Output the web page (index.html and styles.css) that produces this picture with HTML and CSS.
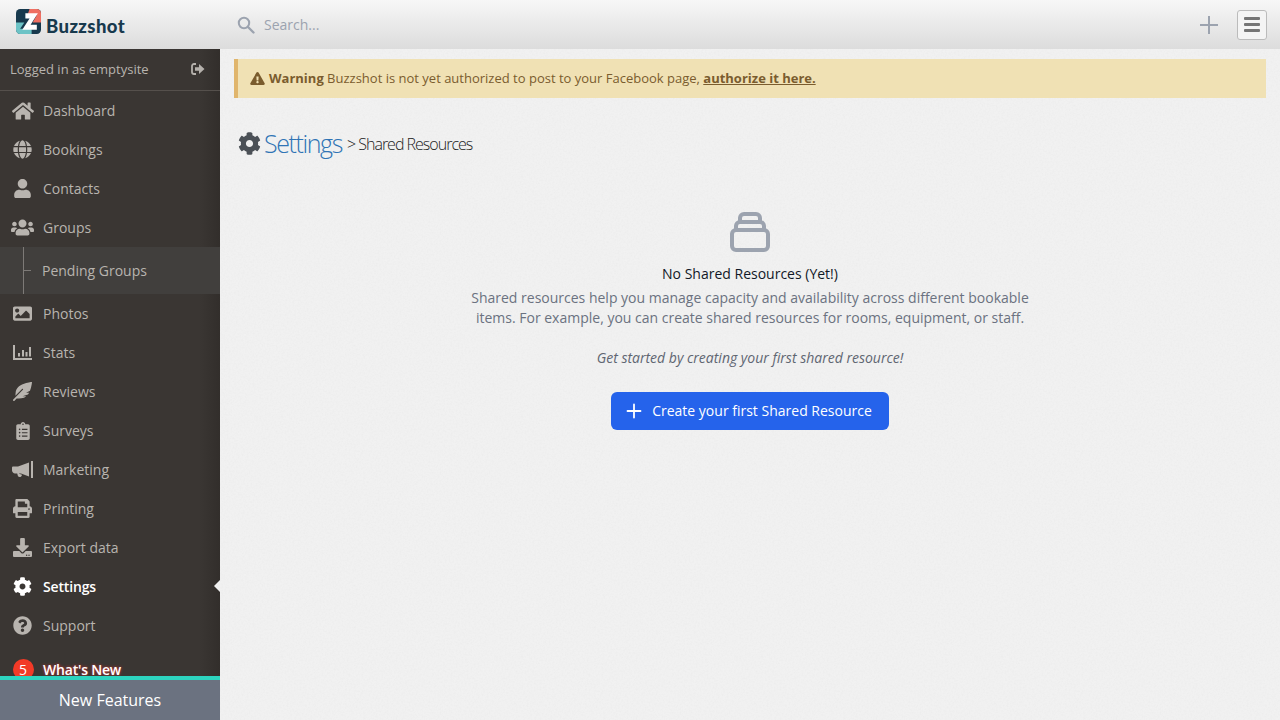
FILE: index.html
```html
<!DOCTYPE html>
<html lang="en">
<head>
<meta charset="utf-8">
<title>Buzzshot - Shared Resources</title>
<link rel="stylesheet" href="styles.css">
</head>
<body>
<header class="topbar">
  <div class="brand">
    <svg class="logo" viewBox="0 0 24 24" width="25" height="25">
      <rect width="24" height="24" rx="4" fill="#17394d"/>
      <path d="M13 0h7a4 4 0 0 1 4 4v9h-8l4-7H11z" fill="#ef6f62"/>
      <path d="M0 13h8l-4 6h11v5H4a4 4 0 0 1-4-4z" fill="#6cc3c6"/>
      <path d="M9 4h12l-7 11h6v5H6l7-11H9z" fill="#fff"/>
    </svg>
    <span class="brand-name">Buzzshot</span>
  </div>
  <div class="search">
    <svg class="search-icon" viewBox="0 0 18 18" width="18" height="18"><circle cx="7" cy="7" r="5.2" fill="none" stroke="#9ca3af" stroke-width="2"/><path d="M11 11l5.5 5.500" stroke="#9ca3af" stroke-width="2.400" stroke-linecap="round"/></svg>
    <span class="search-text">Search...</span>
  </div>
  <svg class="add-icon" viewBox="0 0 20 20" width="20" height="20"><path d="M10 1v18M1 10h18" stroke="#9ca3af" stroke-width="2"/></svg>
  <button class="menu-btn" type="button"><span></span><span></span><span></span></button>
</header>
<div class="body-row">
  <aside class="sidebar">
    <div class="login-row">
      <span>Logged in as emptysite</span>
      <svg class="logout" viewBox="0 0 14 12" width="14" height="12"><path d="M5 1H3a2 2 0 0 0-2 2v6a2 2 0 0 0 2 2h2" fill="none" stroke="#b5b1ac" stroke-width="1.800"/><path d="M4 4.300h4V1l5.500 5L8 11V7.700H4z" fill="#b5b1ac"/></svg>
    </div>
    <nav class="nav">
      <a class="nav-item"><span class="ico"><svg viewBox="0 0 576 512" width="22" height="20"><path d="M280.37 148.26L96 300.11V464a16 16 0 0 0 16 16l112.06-.29a16 16 0 0 0 15.92-16V368a16 16 0 0 1 16-16h64a16 16 0 0 1 16 16v95.64a16 16 0 0 0 16 16.05L464 480a16 16 0 0 0 16-16V300L295.67 148.26a12.19 12.19 0 0 0-15.3 0zM571.6 251.47L488 182.56V44.05a12 12 0 0 0-12-12h-56a12 12 0 0 0-12 12v72.61L318.47 43a48 48 0 0 0-61 0L4.34 251.47a12 12 0 0 0-1.6 16.9l25.5 31A12 12 0 0 0 45.15 301l235.22-193.74a12.19 12.19 0 0 1 15.3 0L530.9 301a12 12 0 0 0 16.9-1.6l25.5-31a12 12 0 0 0-1.7-16.93z"/></svg></span>Dashboard</a>
      <a class="nav-item"><span class="ico"><svg viewBox="0 0 496 512" width="19" height="19"><path d="M336.5 160C322 70.7 287.8 8 248 8s-74 62.7-88.5 152h177zM152 256c0 22.2 1.2 43.5 3.3 64h185.3c2.1-20.5 3.3-41.8 3.3-64s-1.2-43.5-3.3-64H155.3c-2.1 20.5-3.3 41.8-3.3 64zm324.7-96c-28.6-67.9-86.5-120.4-158-141.6 24.4 33.8 41.2 84.7 50 141.6h108zM177.2 18.4C105.8 39.6 47.8 92.1 19.3 160h108c8.7-56.9 25.5-107.8 49.9-141.6zM487.4 192H372.7c2.1 21 3.3 42.5 3.3 64s-1.2 43-3.3 64h114.6c5.5-20.5 8.6-41.8 8.6-64s-3.1-43.5-8.5-64zM120 256c0-21.5 1.2-43 3.3-64H8.6C3.2 212.5 0 233.8 0 256s3.2 43.5 8.6 64h114.6c-2-21-3.2-42.5-3.2-64zm39.5 96c14.5 89.3 48.7 152 88.5 152s74-62.7 88.5-152h-177zm159.3 141.6c71.4-21.2 129.4-73.7 158-141.6h-108c-8.8 56.9-25.6 107.8-50 141.6zM19.3 352c28.6 67.9 86.5 120.4 158 141.6-24.4-33.8-41.2-84.7-50-141.6h-108z"/></svg></span>Bookings</a>
      <a class="nav-item"><span class="ico"><svg viewBox="0 0 448 512" width="17" height="19"><path d="M224 256c70.7 0 128-57.3 128-128S294.7 0 224 0 96 57.3 96 128s57.3 128 128 128zm89.6 32h-16.7c-22.2 10.2-46.9 16-72.9 16s-50.6-5.8-72.9-16h-16.7C60.2 288 0 348.2 0 422.4V464c0 26.5 21.5 48 48 48h352c26.5 0 48-21.5 48-48v-41.6c0-74.2-60.2-134.4-134.4-134.4z"/></svg></span>Contacts</a>
      <a class="nav-item"><span class="ico"><svg viewBox="0 0 640 512" width="24" height="19"><path d="M96 224c35.3 0 64-28.7 64-64s-28.7-64-64-64-64 28.7-64 64 28.7 64 64 64zm448 0c35.3 0 64-28.7 64-64s-28.7-64-64-64-64 28.7-64 64 28.7 64 64 64zm32 32h-64c-17.6 0-33.5 7.1-45.1 18.6 40.3 22.1 68.9 62 75.1 109.4h66c17.7 0 32-14.3 32-32v-32c0-35.3-28.7-64-64-64zm-256 0c61.9 0 112-50.1 112-112S381.9 32 320 32 208 82.1 208 144s50.1 112 112 112zm76.8 32h-8.3c-20.8 10-43.9 16-68.5 16s-47.6-6-68.5-16h-8.3C179.6 288 128 339.6 128 403.2V432c0 26.5 21.5 48 48 48h288c26.5 0 48-21.5 48-48v-28.8c0-63.6-51.6-115.2-115.2-115.2zm-223.7-13.4C161.5 263.1 145.6 256 128 256H64c-35.3 0-64 28.7-64 64v32c0 17.7 14.3 32 32 32h65.9c6.3-47.4 34.9-87.3 75.2-109.4z"/></svg></span>Groups</a>
      <div class="subnav"><span class="tree"></span><a class="sub-item">Pending Groups</a></div>
      <a class="nav-item"><span class="ico"><svg viewBox="0 0 512 512" width="19" height="19"><path d="M464 448H48c-26.51 0-48-21.49-48-48V112c0-26.51 21.49-48 48-48h416c26.51 0 48 21.49 48 48v288c0 26.51-21.49 48-48 48zM112 120c-30.928 0-56 25.072-56 56s25.072 56 56 56 56-25.072 56-56-25.072-56-56-56zM64 384h384V272l-87.515-87.515c-4.686-4.686-12.284-4.686-16.971 0L208 320l-55.515-55.515c-4.686-4.686-12.284-4.686-16.971 0L64 336v48z"/></svg></span>Photos</a>
      <a class="nav-item"><span class="ico"><svg viewBox="0 0 19 15" width="19" height="15"><path d="M0 0h2v13h17v2H0zM5 8h2v3.500H5zM9 5h2v6.500H9zM12.500 7h2v4.500h-2zM16 2h2v9.500h-2z"/></svg></span>Stats</a>
      <a class="nav-item"><span class="ico"><svg viewBox="0 0 512 512" width="19" height="19"><path d="M512 0C460.22 3.56 96.44 38.2 71.01 287.61c-3.09 26.66-4.84 53.44-5.99 80.24l178.87-178.69c6.25-6.25 16.4-6.25 22.65 0s6.25 16.38 0 22.63L7.04 471.03c-9.38 9.37-9.38 24.57 0 33.94 9.38 9.37 24.59 9.37 33.98 0l57.13-57.07c42.09-.14 84.15-2.53 125.96-7.36 53.48-5.44 97.02-26.47 132.58-56.54H255.74l146.79-48.88c11.25-14.89 21.37-30.71 30.45-47.12h-81.14l106.54-53.21C500.29 132.86 510.19 26.26 512 0z"/></svg></span>Reviews</a>
      <a class="nav-item"><span class="ico"><svg viewBox="0 0 384 512" width="14" height="18"><path d="M336 64h-80c0-35.3-28.7-64-64-64s-64 28.7-64 64H48C21.5 64 0 85.5 0 112v352c0 26.5 21.5 48 48 48h288c26.5 0 48-21.500 48-48V112c0-26.500-21.500-48-48-48zM96 424c-13.300 0-24-10.700-24-24s10.700-24 24-24 24 10.700 24 24-10.700 24-24 24zm0-96c-13.300 0-24-10.700-24-24s10.700-24 24-24 24 10.700 24 24-10.700 24-24 24zm0-96c-13.300 0-24-10.700-24-24s10.700-24 24-24 24 10.700 24 24-10.700 24-24 24zm96-192c13.300 0 24 10.700 24 24s-10.700 24-24 24-24-10.700-24-24 10.700-24 24-24zm128 368c0 4.400-3.600 8-8 8H168c-4.400 0-8-3.600-8-8v-16c0-4.400 3.600-8 8-8h144c4.400 0 8 3.600 8 8v16zm0-96c0 4.400-3.600 8-8 8H168c-4.400 0-8-3.600-8-8v-16c0-4.400 3.600-8 8-8h144c4.400 0 8 3.600 8 8v16zm0-96c0 4.400-3.600 8-8 8H168c-4.400 0-8-3.600-8-8v-16c0-4.400 3.600-8 8-8h144c4.400 0 8 3.600 8 8v16z"/></svg></span>Surveys</a>
      <a class="nav-item"><span class="ico"><svg viewBox="0 0 21 17" width="21" height="17"><path d="M0 6.500a1 1 0 0 1 1-1h5l11-4v14l-8-3H3C1.500 12.500 0 11 0 9.500zM19 0h2v17h-2zM7 12.800l3 1a2.300 2.300 0 0 1-4 1.500L5.200 12.500h1.800z"/></svg></span>Marketing</a>
      <a class="nav-item"><span class="ico"><svg viewBox="0 0 512 512" width="19" height="19"><path d="M448 192V77.25c0-8.49-3.37-16.62-9.37-22.63L393.37 9.37c-6-6-14.14-9.37-22.63-9.37H96C78.33 0 64 14.33 64 32v160c-35.35 0-64 28.65-64 64v112c0 8.84 7.16 16 16 16h48v96c0 17.67 14.33 32 32 32h320c17.67 0 32-14.33 32-32v-96h48c8.84 0 16-7.16 16-16V256c0-35.35-28.65-64-64-64zm-64 256H128v-96h256v96zm0-224H128V64h192v48c0 8.84 7.16 16 16 16h48v96zm48 72c-13.25 0-24-10.75-24-24 0-13.26 10.75-24 24-24s24 10.74 24 24c0 13.25-10.75 24-24 24z"/></svg></span>Printing</a>
      <a class="nav-item"><span class="ico"><svg viewBox="0 0 512 512" width="19" height="19"><path d="M216 0h80c13.3 0 24 10.7 24 24v168h87.700c17.800 0 26.700 21.500 14.100 34.100L269.700 378.300c-7.500 7.500-19.800 7.500-27.300 0L90.100 226.100c-12.600-12.600-3.700-34.100 14.100-34.100H192V24c0-13.300 10.700-24 24-24zm296 376v112c0 13.300-10.700 24-24 24H24c-13.300 0-24-10.700-24-24V376c0-13.300 10.700-24 24-24h146.700l49 49c20.100 20.100 52.500 20.100 72.600 0l49-49H488c13.300 0 24 10.700 24 24zm-124 88c0-11-9-20-20-20s-20 9-20 20 9 20 20 20 20-9 20-20zm64 0c0-11-9-20-20-20s-20 9-20 20 9 20 20 20 20-9 20-20z"/></svg></span>Export data</a>
      <a class="nav-item active"><span class="ico"><svg viewBox="0 0 512 512" width="19" height="19"><path d="M487.4 315.7l-42.6-24.6c4.300-23.200 4.300-47 0-70.200l42.600-24.600c4.900-2.800 7.100-8.600 5.500-14-11.100-35.600-30-67.800-54.700-94.600-3.800-4.100-10-5.100-14.800-2.300L380.800 110c-17.900-15.400-38.500-27.300-60.800-35.100V25.800c0-5.600-3.900-10.500-9.400-11.700-36.700-8.200-74.300-7.800-109.200 0-5.500 1.200-9.400 6.100-9.400 11.700V75c-22.200 7.900-42.800 19.800-60.800 35.100L88.700 85.500c-4.900-2.800-11-1.900-14.800 2.300-24.700 26.700-43.600 58.900-54.700 94.600-1.700 5.400.6 11.200 5.500 14L67.300 221c-4.300 23.200-4.300 47 0 70.200l-42.600 24.600c-4.900 2.800-7.100 8.600-5.500 14 11.100 35.600 30 67.800 54.700 94.600 3.800 4.100 10 5.100 14.800 2.300l42.600-24.600c17.900 15.400 38.500 27.300 60.800 35.100v49.200c0 5.600 3.900 10.500 9.400 11.700 36.700 8.200 74.300 7.800 109.200 0 5.500-1.200 9.400-6.100 9.400-11.700v-49.200c22.200-7.900 42.800-19.800 60.800-35.100l42.600 24.600c4.900 2.800 11 1.900 14.800-2.300 24.700-26.700 43.600-58.900 54.700-94.600 1.500-5.500-.7-11.300-5.600-14.100zM256 336c-44.100 0-80-35.900-80-80s35.900-80 80-80 80 35.900 80 80-35.900 80-80 80z"/></svg></span>Settings<span class="caret"></span></a>
      <a class="nav-item"><span class="ico"><svg viewBox="0 0 512 512" width="19" height="19"><path d="M504 256c0 136.997-111.043 248-248 248S8 392.997 8 256C8 119.083 119.043 8 256 8s248 111.083 248 248zM262.655 90c-54.497 0-89.255 22.957-116.549 63.758-3.536 5.286-2.353 12.415 2.715 16.258l34.699 26.310c5.205 3.947 12.621 3.008 16.665-2.122 17.864-22.658 30.113-35.797 57.303-35.797 20.429 0 45.698 13.148 45.698 32.958 0 14.976-12.363 22.667-32.534 33.976C247.128 238.528 216 254.941 216 296v4c0 6.627 5.373 12 12 12h56c6.627 0 12-5.373 12-12v-1.333c0-28.462 83.186-29.647 83.186-106.667 0-58.002-60.165-102-116.531-102zM256 338c-25.365 0-46 20.635-46 46 0 25.364 20.635 46 46 46s46-20.636 46-46c0-25.365-20.635-46-46-46z"/></svg></span>Support</a>
      <a class="nav-item news"><span class="ico"><span class="badge">5</span></span>What's New</a>
    </nav>
    <div class="features">New Features</div>
  </aside>
  <main class="content">
    <div class="alert">
      <svg viewBox="0 0 576 512" width="15" height="13"><path d="M569.517 440.013C587.975 472.007 564.806 512 527.940 512H48.054c-36.937 0-59.999-40.055-41.577-71.987L246.423 24.314c18.467-32.009 64.720-31.951 83.154 0l239.940 415.699zM288 354c-25.405 0-46 20.595-46 46s20.595 46 46 46 46-20.595 46-46-20.595-46-46-46zm-43.673-165.346l7.418 136c.347 6.364 5.609 11.346 11.982 11.346h48.546c6.373 0 11.635-4.982 11.982-11.346l7.418-136c.375-6.874-5.098-12.654-11.982-12.654h-63.383c-6.884 0-12.356 5.780-11.981 12.654z"/></svg>
      <p class="alert-text"><b>Warning</b> Buzzshot is not yet authorized to post to your Facebook page, <a class="alert-link">authorize it here.</a></p>
    </div>
    <h1 class="page-title">
      <svg viewBox="0 0 512 512" width="23" height="23"><path d="M487.400 315.700l-42.600-24.600c4.300-23.200 4.300-47 0-70.200l42.600-24.600c4.900-2.800 7.100-8.600 5.500-14-11.100-35.600-30-67.800-54.700-94.600-3.800-4.100-10-5.100-14.800-2.300L380.800 110c-17.900-15.400-38.500-27.300-60.800-35.100V25.800c0-5.600-3.900-10.500-9.400-11.700-36.700-8.200-74.300-7.800-109.200 0-5.500 1.200-9.400 6.100-9.400 11.700V75c-22.200 7.900-42.800 19.800-60.800 35.100L88.700 85.500c-4.900-2.800-11-1.900-14.800 2.300-24.700 26.700-43.600 58.900-54.700 94.600-1.700 5.400.6 11.200 5.500 14L67.300 221c-4.300 23.200-4.300 47 0 70.200l-42.600 24.600c-4.900 2.800-7.100 8.600-5.500 14 11.100 35.600 30 67.800 54.700 94.600 3.800 4.100 10 5.100 14.800 2.300l42.600-24.600c17.900 15.400 38.500 27.300 60.800 35.100v49.200c0 5.600 3.900 10.500 9.400 11.700 36.700 8.200 74.300 7.800 109.200 0 5.500-1.200 9.400-6.100 9.400-11.700v-49.200c22.200-7.900 42.800-19.800 60.800-35.100l42.600 24.600c4.900 2.800 11 1.900 14.800-2.300 24.700-26.700 43.600-58.900 54.700-94.600 1.500-5.500-.7-11.300-5.600-14.100zM256 336c-44.100 0-80-35.900-80-80s35.900-80 80-80 80 35.900 80 80-35.900 80-80 80z"/></svg>
      <span class="title-main">Settings</span><span class="title-sub">&gt; Shared Resources</span>
    </h1>
    <section class="empty">
      <svg class="empty-icon" viewBox="0 0 24 24" width="48" height="48"><path d="M19 11H5m14 0a2 2 0 012 2v6a2 2 0 01-2 2H5a2 2 0 01-2-2v-6a2 2 0 012-2m14 0V9a2 2 0 00-2-2M5 11V9a2 2 0 012-2m0 0V5a2 2 0 012-2h6a2 2 0 012 2v2M7 7h10" fill="none" stroke="#9ca3af" stroke-width="2" stroke-linecap="round" stroke-linejoin="round"/></svg>
      <h2 class="empty-title">No Shared Resources (Yet!)</h2>
      <p class="empty-text">Shared resources help you manage capacity and availability across different bookable items. For example, you can create shared resources for rooms, equipment, or staff.</p>
      <p class="empty-cta">Get started by creating your first shared resource!</p>
      <button class="primary" type="button"><svg viewBox="0 0 16 16" width="16" height="16"><path d="M8 1.500v13M1.500 8h13" stroke="#fff" stroke-width="1.800" stroke-linecap="round"/></svg><span class="primary-label">Create your first Shared Resource</span></button>
    </section>
  </main>
</div>
</body>
</html>
```
FILE: styles.css
```css
* { box-sizing: border-box; }
html, body { height: 100%; }
body {
  margin: 0;
  height: 720px;
  overflow: hidden;
  display: flex;
  flex-direction: column;
  font-family: "Open Sans", "Liberation Sans", sans-serif;
  font-size: 14px;
  background: #f0f0f0;
  color: #111;
}
.topbar {
  height: 49px;
  flex: none;
  display: flex;
  align-items: center;
  padding-right: 13px;
  background: linear-gradient(#f7f7f7, #dcdcdc);
}
.brand {
  width: 220px;
  flex: none;
  display: flex;
  align-items: center;
  padding: 0 0 0 16px;
}
.logo { flex: none; margin-top: -7px; margin-right: 5px; }
.brand-name {
  margin-top: 3px;
  font-family: Lato, sans-serif;
  font-weight: 900;
  font-size: 18.500px;
  line-height: 22px;
  letter-spacing: .4px;
  color: #17394d;
}
.search { flex: 1; display: flex; align-items: center; padding-left: 17px; gap: 9px; }
.search-text { color: #9ca3af; font-size: 14px; }
.add-icon { flex: none; margin-right: 18px; }
.menu-btn {
  width: 30px;
  height: 30px;
  padding: 0;
  display: flex;
  flex-direction: column;
  align-items: center;
  justify-content: center;
  gap: 3px;
  background: #f4f4f4;
  border: 1px solid #bbb;
  border-radius: 3px;
}
.menu-btn span { width: 16px; height: 3px; background: #757575; border-radius: 1px; }

.body-row { flex: 1; display: flex; min-height: 0; }
.sidebar {
  width: 220px;
  flex: none;
  display: flex;
  flex-direction: column;
  background: linear-gradient(90deg, #3a3633 0, #3a3633 200px, #322e2b 220px);
  color: #b8b4af;
}
.login-row {
  height: 42px;
  flex: none;
  display: flex;
  align-items: center;
  justify-content: space-between;
  padding: 0 15px 2px 10px;
  font-size: 13px;
  border-bottom: 1px solid #55504c;
}
.nav { flex: 1; min-height: 0; overflow: hidden; }
.nav-item {
  height: 39px;
  display: flex;
  align-items: center;
  position: relative;
  font-size: 14px;
  color: #b8b4af;
  fill: #b8b4af;
}
.ico {
  width: 23px;
  flex: none;
  margin: 0 9px 0 11px;
  display: flex;
  justify-content: center;
}
.active { color: #fff; fill: #fff; font-weight: 600; letter-spacing: -.15px; }
.caret {
  position: absolute;
  right: 0;
  top: 13px;
  border: 6px solid transparent;
  border-left-width: 0;
  border-right-color: #f0f0f0;
}
.subnav {
  height: 47px;
  display: flex;
  align-items: center;
  position: relative;
  padding-left: 42px;
  background: #413f3d;
}
.tree { position: absolute; left: 23px; top: 0; bottom: 0; width: 1px; background: #7d7a77; }
.tree::after { content: ""; position: absolute; left: 0; top: 23px; width: 8px; height: 1px; background: #7d7a77; }
.sub-item { font-size: 14px; color: #b8b4af; }
.news { color: #fff; font-weight: 600; letter-spacing: -.2px; padding-top: 10px; text-shadow: 0 0 3px #e3342f; }
.badge {
  width: 21px;
  height: 21px;
  flex: none;
  margin-left: 1px;
  border-radius: 50%;
  background: #f23a27;
  color: #fff;
  font-weight: 400;
  text-shadow: none;
  display: flex;
  align-items: center;
  justify-content: center;
}
.features {
  height: 44px;
  flex: none;
  display: flex;
  align-items: center;
  justify-content: center;
  border-top: 4px solid #2dd4bf;
  background: #6b7280;
  color: #fff;
  font-size: 16px;
}

.content {
  flex: 1;
  min-width: 0;
  padding: 10px 14px 0;
  background-color: #f3f3f3;
  background-image: url("data:image/svg+xml,%3Csvg xmlns='http://www.w3.org/2000/svg' width='240' height='240'%3E%3Cfilter id='n'%3E%3CfeTurbulence type='fractalNoise' baseFrequency='.55' numOctaves='3'/%3E%3CfeColorMatrix values='0 0 0 0 .5 0 0 0 0 .5 0 0 0 0 .5 0 0 0 .12 0'/%3E%3C/filter%3E%3Crect width='240' height='240' filter='url(%23n)'/%3E%3C/svg%3E");
}
.alert {
  height: 39px;
  display: flex;
  align-items: center;
  gap: 4px;
  padding-left: 12px;
  background: #f0e1b4;
  border-left: 4px solid #e0b56c;
  color: #7a5c2e;
  fill: #7a5c2e;
  font-size: 13px;
}
.alert-text { margin: 0 0 2px; }
.alert-link { font-weight: 700; text-decoration: underline; }
.page-title {
  margin: 30px 0 0 4px;
  height: 30px;
  display: flex;
  align-items: center;
  font-weight: 300;
  fill: #4b5056;
}
.title-main { margin-left: 3px; font-size: 25px; letter-spacing: -1.400px; color: #2f74b5; }
.title-sub { margin: 2px 0 0 5px; font-size: 16px; letter-spacing: -1px; color: #222; }

.empty { display: flex; flex-direction: column; align-items: center; margin-top: 50px; text-align: center; }
.empty-title { margin: 8px 0 0; font-size: 14px; line-height: 20px; font-weight: 400; color: #111827; }
.empty-text { margin: 4px 0 0; width: 576px; font-size: 14px; line-height: 20px; color: #6b7280; }
.empty-cta { margin: 20px 0 0; font-size: 14px; line-height: 20px; font-style: italic; color: #5f6672; }
.primary {
  margin-top: 24px;
  width: 278px;
  height: 38px;
  padding: 0 2px 0 0;
  display: flex;
  align-items: center;
  justify-content: center;
  gap: 10px;
  border: 0;
  border-radius: 6px;
  background: #2563eb;
  color: #fff;
  font: 500 14px "Open Sans", sans-serif;
}
.primary-label { margin-top: -2px; }
```
